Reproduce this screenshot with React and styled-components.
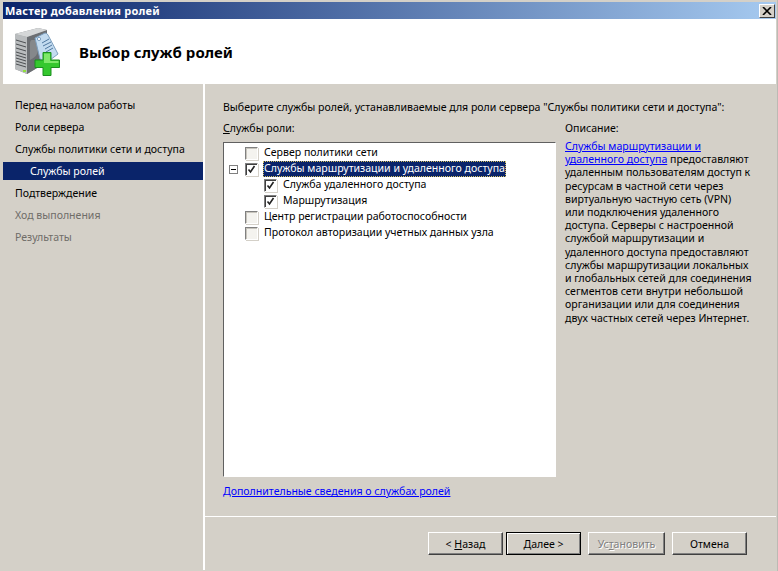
import styled, { createGlobalStyle } from "styled-components";

const GlobalStyle = createGlobalStyle`
  html, body { margin: 0; padding: 0; background: #d4d0c8; }
  body { font-family: "Noto Sans", "Liberation Sans", sans-serif; font-size: 10.55px; color: #000; }
`;

const Frame = styled.div`
  width: 778px;
  height: 571px;
  box-sizing: border-box;
  padding: 2px 1px 1px 3px;
  display: flex;
  flex-direction: column;
  overflow: hidden;
  background: #d4d0c8;
  border-right: 1px solid #bcbab4;
`;

const TitleBar = styled.div`
  height: 17px;
  flex: none;
  display: flex;
  align-items: center;
  justify-content: space-between;
  padding: 0 1px 0 2px;
  background: linear-gradient(90deg, #0a246a, #a6caf0);
  color: #fff;
  font-weight: 700;
  font-size: 11px;
  letter-spacing: 0.2px;
`;

const CloseButton = styled.div`
  width: 16px;
  height: 14px;
  box-sizing: border-box;
  background: #d4d0c8;
  border: 1px solid;
  border-color: #fff #404040 #404040 #fff;
  display: flex;
  align-items: center;
  justify-content: center;
`;

const Header = styled.div`
  height: 65px;
  flex: none;
  background: #fff;
  display: flex;
  align-items: center;
  gap: 19px;
  padding-left: 11px;
`;

const HeaderTitle = styled.h1`
  margin: 0;
  font-size: 15px;
  font-weight: 700;
`;

const Body = styled.div`
  flex: 1;
  display: flex;
  min-height: 0;
`;

const Nav = styled.div`
  width: 200px;
  flex: none;
  padding-top: 12px;
  border-right: 2px solid #fff;
`;

const NavItem = styled.div`
  height: 18px;
  line-height: 18px;
  margin-bottom: 4px;
  padding-left: ${(p) => (p.$sub ? 27 : 12)}px;
  color: ${(p) => (p.$active ? "#fff" : p.$muted ? "#6f6d68" : "#000")};
  background: ${(p) => (p.$active ? "#0a246a" : "transparent")};
`;

const Main = styled.div`
  flex: 1;
  display: flex;
  flex-direction: column;
  min-width: 0;
`;

const Content = styled.div`
  flex: 1;
  padding: 14px 0 0 18px;
`;

const Intro = styled.div`
  height: 18px;
  line-height: 18px;
  white-space: nowrap;
`;

const Columns = styled.div`
  display: flex;
  gap: 9px;
  margin-top: 3px;
`;

const LeftColumn = styled.div`
  width: 333px;
  flex: none;
`;

const ColumnLabel = styled.div`
  height: 18px;
  line-height: 18px;
  margin-bottom: 3px;
`;

const TreeBox = styled.div`
  height: 335px;
  margin-top: 5px;
  box-sizing: border-box;
  background: #fff;
  border: 1px solid;
  border-color: #606060 #fff #fff #606060;
  outline: 1px solid #d4d0c8;
  padding: 2px 0 0 0;
`;

const Row = styled.div`
  height: 16px;
  display: flex;
  align-items: center;
  padding-left: ${(p) => p.$indent}px;
`;

const Expander = styled.div`
  width: 9px;
  height: 9px;
  box-sizing: border-box;
  border: 1px solid #808080;
  margin-right: 7px;
  display: flex;
  align-items: center;
  justify-content: center;
  &::before {
    content: "";
    width: 5px;
    height: 1px;
    background: #000;
  }
`;

const Check = styled.div`
  width: 13px;
  height: 13px;
  flex: none;
  box-sizing: border-box;
  background: ${(p) => (p.$checked ? "#fff" : "#f4f3ef")};
  border: 1px solid;
  border-color: #808080 #fff #fff #808080;
  box-shadow: 1px 1px 0 #d4d0c8, inset 1px 1px 0 ${(p) => (p.$checked ? "#404040" : "#c8c5bd")};
  display: flex;
  align-items: center;
  justify-content: center;
`;

const RowLabel = styled.span`
  margin-left: 5px;
  white-space: nowrap;
  height: 16px;
  line-height: 15px;
  padding: 0 1px;
  box-sizing: border-box;
  ${(p) => p.$selected && `
    background: #0a246a;
    color: #fff;
    outline: 1px dotted #d4c060;
    outline-offset: -1px;
  `}
`;

const Description = styled.div`
  width: 205px;
  flex: none;
`;

const DescText = styled.div`
  line-height: 13.2px;
  white-space: nowrap;
  margin-top: 2px;
`;

const Link = styled.a`
  color: #0000ff;
  text-decoration: underline;
`;

const MoreLink = styled(Link)`
  display: block;
  margin-top: 6px;
  line-height: 16px;
`;

const Footer = styled.div`
  height: 54px;
  box-sizing: border-box;
  flex: none;
  border-top: 1px solid #fff;
  display: flex;
  justify-content: flex-end;
  align-items: flex-start;
  gap: 7px;
  padding: 15px 29px 0 0;
`;

const Button = styled.div`
  width: ${(p) => (p.$wide ? 77 : 75)}px;
  height: 23px;
  box-sizing: border-box;
  display: flex;
  align-items: center;
  justify-content: center;
  background: #d4d0c8;
  border: 1px solid;
  border-color: #fff #404040 #404040 #fff;
  box-shadow: inset -1px -1px 0 #808080;
  color: ${(p) => (p.$disabled ? "#808080" : "#000")};
  text-shadow: ${(p) => (p.$disabled ? "1px 1px 0 #fff" : "none")};
  margin-right: ${(p) => (p.$tight ? -4 : 0)}px;
  ${(p) => p.$primary && `
    border-color: #000;
    box-shadow: inset 1px 1px 0 #fff, inset -1px -1px 0 #808080;
  `}
  u { text-underline-offset: 1px; }
`;

const WizardIcon = () => (
  <svg width="46" height="48" viewBox="0 0 46 48">
    <path d="M1 6 L24 0 L33 2 L33 34 L13 46 L1 41 Z" fill="#8a8d90" />
    <path d="M1 6 L13 9 L13 46 L1 41 Z" fill="#b9bcbe" />
    <path d="M13 9 L33 2 L33 34 L13 46 Z" fill="#6b6e72" />
    <path d="M1 6 L24 0 L33 2 L13 9 Z" fill="#d5d7d8" />
    <path d="M18 12 Q16 12 16 16 L16 32 Q24 28 24 22 L24 12 Z" fill="#85888b" />
    <path d="M2 12 L12 15 M2 16 L12 19 M2 20 L12 23 M2 24 L12 27 M2 27 L12 30 M2 30 L12 33 M2 33 L12 36 M2 36 L12 39" stroke="#4c4f52" />
    <rect x="9" y="42" width="3" height="2" fill="#8ee03a" />
    <path d="M21 10 L31 5 Q33 5 34 7 L44 26 L32 35 L26 31 Z" fill="#c3dbf0" stroke="#7d9fbe" />
    <circle cx="25" cy="11" r="1.6" fill="#fff" stroke="#7d9fbe" />
    <path d="M28 15 L35 11 M29 18 L37 14 M31 21 L38 17 M32 24 L39 20" stroke="#4f78a0" />
    <path d="M29 24.5 H37 V32 H45.5 V39.5 H37 V47.5 H29 V39.5 H21 V32 H29 Z" fill="#35c82e" stroke="#1b8f1f" />
    <path d="M30 25.5 H36 V33 H44.5 V35 H30 Z" fill="#7fe86a" />
  </svg>
);

const Tick = () => (
  <svg width="9" height="9" viewBox="0 0 9 9">
    <path d="M1.5 4.5 L3.5 7 L7.5 1" fill="none" stroke="#222" strokeWidth="1.6" />
  </svg>
);

const navItems = [
  { label: "Перед началом работы" },
  { label: "Роли сервера" },
  { label: "Службы политики сети и доступа" },
  { label: "Службы ролей", sub: true, active: true },
  { label: "Подтверждение" },
  { label: "Ход выполнения", muted: true },
  { label: "Результаты", muted: true },
];

const treeRows = [
  { label: "Сервер политики сети", indent: 21 },
  { label: "Службы маршрутизации и удаленного доступа", indent: 5, checked: true, expander: true, selected: true },
  { label: "Служба удаленного доступа", indent: 40, checked: true },
  { label: "Маршрутизация", indent: 40, checked: true },
  { label: "Центр регистрации работоспособности", indent: 21 },
  { label: "Протокол авторизации учетных данных узла", indent: 21 },
];

export default function App() {
  return (
    <>
      <GlobalStyle />
      <Frame>
        <TitleBar>
          Мастер добавления ролей
          <CloseButton>
            <svg width="10" height="8" viewBox="0 0 10 8">
              <path d="M1 0 L9 8 M9 0 L1 8" stroke="#000" strokeWidth="1.6" />
            </svg>
          </CloseButton>
        </TitleBar>
        <Header>
          <WizardIcon />
          <HeaderTitle>Выбор служб ролей</HeaderTitle>
        </Header>
        <Body>
          <Nav>
            {navItems.map((item) => (
              <NavItem key={item.label} $sub={item.sub} $active={item.active} $muted={item.muted}>
                {item.label}
              </NavItem>
            ))}
          </Nav>
          <Main>
            <Content>
              <Intro>Выберите службы ролей, устанавливаемые для роли сервера "Службы политики сети и доступа":</Intro>
              <Columns>
                <LeftColumn>
                  <ColumnLabel><u>С</u>лужбы роли:</ColumnLabel>
                  <TreeBox>
                    {treeRows.map((row) => (
                      <Row key={row.label} $indent={row.indent}>
                        {row.expander && <Expander />}
                        <Check $checked={row.checked}>{row.checked && <Tick />}</Check>
                        <RowLabel $selected={row.selected}>{row.label}</RowLabel>
                      </Row>
                    ))}
                  </TreeBox>
                  <MoreLink>Дополнительные сведения о службах ролей</MoreLink>
                </LeftColumn>
                <Description>
                  <ColumnLabel>Описание:</ColumnLabel>
                  <DescText>
                    <Link>Службы маршрутизации и</Link><br />
                    <Link>удаленного доступа</Link> предоставляют<br />
                    удаленным пользователям доступ к<br />
                    ресурсам в частной сети через<br />
                    виртуальную частную сеть (VPN)<br />
                    или подключения удаленного<br />
                    доступа. Серверы с настроенной<br />
                    службой маршрутизации и<br />
                    удаленного доступа предоставляют<br />
                    службы маршрутизации локальных<br />
                    и глобальных сетей для соединения<br />
                    сегментов сети внутри небольшой<br />
                    организации или для соединения<br />
                    двух частных сетей через Интернет.
                  </DescText>
                </Description>
              </Columns>
            </Content>
            <Footer>
              <Button $tight>&lt;&nbsp;<u>Н</u>азад</Button>
              <Button $primary><u>Д</u>алее &gt;</Button>
              <Button $disabled $wide>Ус<u>т</u>ановить</Button>
              <Button>Отмена</Button>
            </Footer>
          </Main>
        </Body>
      </Frame>
    </>
  );
}
